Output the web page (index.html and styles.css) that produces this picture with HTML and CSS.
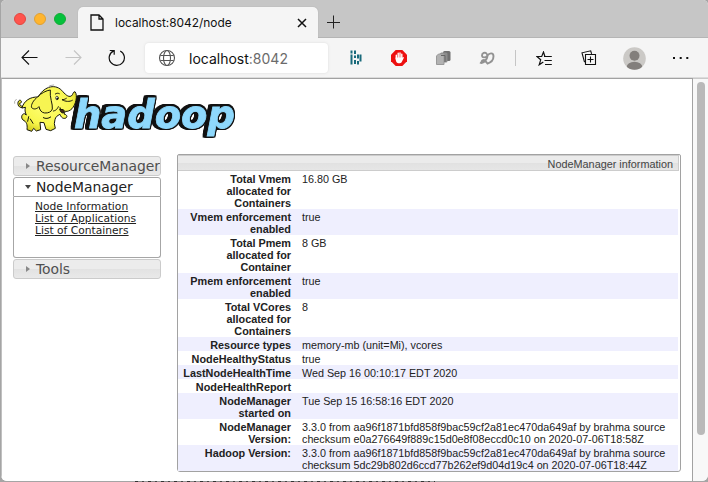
FILE: index.html
```
<!DOCTYPE html>
<html lang="en">
<head>
<meta charset="utf-8">
<title>NodeManager information</title>
<link rel="stylesheet" href="styles.css">
</head>
<body>
<div class="window">
  <header class="tabbar">
    <div class="lights"><i class="red"></i><i class="amber"></i><i class="green"></i></div>
    <div class="tab">
      <svg class="page-icon" width="14" height="17" viewBox="0 0 14 17"><path d="M1 1h8l4 4v11H1zM9 1v4h4" fill="none" stroke="#111" stroke-width="1.3"/></svg>
      <span class="tab-title">localhost:8042/node</span>
      <svg width="10" height="10" viewBox="0 0 10 10"><path d="M1 1l8 8M9 1L1 9" stroke="#111" stroke-width="1.5"/></svg>
    </div>
    <svg class="newtab" width="14" height="14" viewBox="0 0 14 14"><path d="M6.500 .5v13M0 7.500h13" stroke="#222" stroke-width="1"/></svg>
  </header>
  <nav class="toolbar">
    <svg class="back" width="17" height="16" viewBox="0 0 17 16"><path d="M16.500 7.500H1M8 .5L1 7.500l7 7" fill="none" stroke="#111" stroke-width="1.1"/></svg>
    <svg class="forward" width="17" height="16" viewBox="0 0 17 16"><path d="M.5 7.500H16M9 .5l7 7-7 7" fill="none" stroke="#c4c4c4" stroke-width="1.1"/></svg>
    <svg class="reload" width="18" height="18" viewBox="0 0 18 18"><path d="M12.200 2A7.600 7.600 0 1 1 5.600 1.900M1.800 1.500H6.200V5.800" fill="none" stroke="#111" stroke-width="1.200"/></svg>
    <div class="address">
      <svg width="18" height="18" viewBox="0 0 18 18"><g fill="none" stroke="#555" stroke-width="1.100"><circle cx="9" cy="9" r="7.500"/><ellipse cx="9" cy="9" rx="3.500" ry="7.500"/><path d="M2.300 6.500h13.400M2.300 11.500h13.400"/></g></svg>
      <span>localhost<em>:8042</em></span>
    </div>
    <svg class="ext1" width="12" height="16" viewBox="0 0 12 16"><path d="M1.500.5v3M1.500 4.500v10M5 .5v3.500M5 5.500v2.500M5 10v4M8 4.500v4M8 11v3.500M10.500 4.500v7" stroke="#196a7b" stroke-width="2"/></svg>
    <svg class="ext2" width="16" height="16" viewBox="0 0 16 16"><path d="M4.700 0h6.600L16 4.700v6.600L11.300 16H4.700L0 11.300V4.700z" fill="#ed1010"/><path d="M5.300 9V5.200M7.200 8V3.200M9 8V2.900M10.800 9V4.200" stroke="#fff" stroke-width="1.400" stroke-linecap="round"/><path d="M4.600 7.500h6.900l1.100-.5.300.8-2.300 4.400c-1 1.400-4 1.400-5 0-.6-.9-1-2.300-1-4.700z" fill="#fff"/></svg>
    <svg class="ext3" width="15" height="16" viewBox="0 0 15 16"><rect x="7" y="1" width="7.500" height="10" rx="1.500" fill="#707070"/><rect x="4" y="2.500" width="7.500" height="10" rx="1.500" fill="#8c8c8c"/><path d="M.5 6l2-2H8v10.500H.5z" fill="#b2b2b2" stroke="#999"/><path d="M5 5.500h4V12" fill="none" stroke="#666"/></svg>
    <svg class="ext4" width="16" height="15" viewBox="0 0 16 15"><path d="M1 11.500c3.500 2 9.500-5.500 6.500-9C6 .8 2.800 2 3 4.800c.3 2.200 3.500 2.200 5.500-.3 2-3 6-3 6 .8 0 4-3 6.500-6.500 7.500M3 12.500c-1.200-3 1.800-4.500 3.300-2.700l2.500 3" fill="none" stroke="#929292" stroke-width="1.900"/></svg>
    <i class="divider"></i>
    <svg class="fav" width="17" height="15" viewBox="0 0 17 15"><path d="M8.800 5.200L7.500 1 5.700 5.500H1l3.700 3.300-1.500 5L7.300 11M8 5.500h7.800M8.500 9.500h7.300M9 13.500h6.800" fill="none" stroke="#111" stroke-width="1.200"/></svg>
    <svg class="coll" width="16" height="16" viewBox="0 0 16 16"><path d="M3.500 12.200L1 2.800 9.700.8l.9 3M4.500 4.500h10v10h-10zM9.500 6.500v6M6.500 9.500h6" fill="none" stroke="#111" stroke-width="1.100"/></svg>
    <svg class="avatar" width="23" height="23" viewBox="0 0 23 23"><clipPath id="disc"><circle cx="11.500" cy="11.500" r="11.300"/></clipPath><g clip-path="url(#disc)"><path d="M0 0h23v23H0z" fill="#cbc9c6"/><circle cx="11.500" cy="8.800" r="5" fill="#837f7c"/><ellipse cx="11.500" cy="20" rx="7.800" ry="5.300" fill="#837f7c"/></g></svg>
    <svg class="dots" width="16" height="4" viewBox="0 0 16 4"><path d="M0 1h2v2H0zM6.700 1h2v2h-2zM13.300 1h2v2h-2z" fill="#111"/></svg>
  </nav>
  <div class="viewport">
    <main class="page">
      <svg class="logo" width="230" height="62" viewBox="0 0 230 62">
        <text class="wordmark" x="64" y="48" textLength="161" lengthAdjust="spacingAndGlyphs">hadoop</text>
        <defs><radialGradient id="hide" cx=".45" cy=".4" r=".65"><stop offset="0" stop-color="#ffff78"/><stop offset=".7" stop-color="#f8f64c"/><stop offset="1" stop-color="#d3cc20"/></radialGradient></defs>
        <g transform="scale(.33333)" stroke="#15150a" stroke-width="3" stroke-linejoin="round" stroke-linecap="round">
          <path d="M36 83C23 84 20 66 28 61c8-2 8 9 1 9 1 9 6 9 10 8" fill="#e6e030"/>
          <path d="M36 83c6-21 25-33 49-32 13-27 47-43 70-20 10 11 19 22 29 17 6-5 4-12 11-13 9 11 2 40-9 51-6 6-13 9-20 8l-4 8c9 2 11 8 6 12-10 4-15-3-18-11-9 5-13 7-15 16l-2 12 3 14-14 7-14-4-6-20-12-1 2 22-13 4-8-8-6 9-14-5c2-17-2-24-12-29-7-7-4-18 4-19l6 4c-4-8-5-16-3-22z" fill="url(#hide)"/>
          <path d="M85 49C68 61 62 77 65 83c8 8 18 2 22-3 2 10 7 18 17 19 11 1 21-4 23-12 2-14-9-36-6-57-11 1-29 10-36 19z" fill="#f7f452"/>
          <path d="M136 42c4-3 8-3 12-1M169 55c-5 3-8 4-13 4 10 6 23 7 31 2M145 80c-4 10-10 12-15 13M56 110l-3 14M100 113c7 4 15 3 22-2M61 117l8 13M150 83c2 7 4 11 10 11" fill="none"/>
          <path d="M150 88l10 1c4 2 4 9-1 10-5 0-9-5-9-11z" fill="#432719"/>
          <ellipse cx="141" cy="54" rx="4" ry="5.500" fill="#fff" stroke-width="2"/><circle cx="142" cy="56" r="3" fill="#111" stroke="none"/>
          <path d="M115 24l4-7 12-2M14 70v-6l5-6" fill="none" stroke="#888" stroke-width="2"/>
        </g>
      </svg>
      <div class="columns">
        <aside class="menu">
          <h3><i class="closed"></i>ResourceManager</h3>
          <h3 class="active"><i class="open"></i>NodeManager</h3>
          <ul><li><a>Node Information</a></li><li><a>List of Applications</a></li><li><a>List of Containers</a></li></ul>
          <h3 class="last"><i class="closed"></i>Tools</h3>
        </aside>
        <section class="info">
          <div class="caption">NodeManager information</div>
          <table>
            <tr><th>Total Vmem<br>allocated for<br>Containers</th><td>16.80 GB</td></tr>
            <tr><th>Vmem enforcement<br>enabled</th><td>true</td></tr>
            <tr><th>Total Pmem<br>allocated for<br>Container</th><td>8 GB</td></tr>
            <tr><th>Pmem enforcement<br>enabled</th><td>true</td></tr>
            <tr><th>Total VCores<br>allocated for<br>Containers</th><td>8</td></tr>
            <tr><th>Resource types</th><td>memory-mb (unit=Mi), vcores</td></tr>
            <tr><th>NodeHealthyStatus</th><td>true</td></tr>
            <tr><th>LastNodeHealthTime</th><td>Wed Sep 16 00:10:17 EDT 2020</td></tr>
            <tr><th>NodeHealthReport</th><td></td></tr>
            <tr><th>NodeManager<br>started on</th><td>Tue Sep 15 16:58:16 EDT 2020</td></tr>
            <tr><th>NodeManager<br>Version:</th><td>3.3.0 from aa96f1871bfd858f9bac59cf2a81ec470da649af by brahma source<br>checksum e0a276649f889c15d0e8f08eccd0c10 on 2020-07-06T18:58Z</td></tr>
            <tr><th>Hadoop Version:</th><td>3.3.0 from aa96f1871bfd858f9bac59cf2a81ec470da649af by brahma source<br>checksum 5dc29b802d6ccd77b262ef9d04d19c4 on 2020-07-06T18:44Z</td></tr>
          </table>
        </section>
      </div>
    </main>
    <div class="scrollbar"><i></i></div>
  </div>
</div>
<div class="backdrop-edge"></div>
</body>
</html>
```
FILE: styles.css
```
* { box-sizing: border-box; }
body { margin: 0; width: 708px; height: 482px; overflow: hidden; background: #a5a5a5; font-family: "Liberation Sans", Arial, sans-serif; }
svg { flex: none; display: block; }
.window { width: 707px; height: 481px; margin-left: 1px; display: flex; flex-direction: column; background: #f5f5f5; border-radius: 5px 5px 6px 6px; overflow: hidden; }
.backdrop-edge { height: 1px; width: 300px; margin-left: 135px; background: repeating-linear-gradient(90deg, #333 0 3px, #8a8a8a 3px 7px, #444 7px 9px, #999 9px 13px); }

.tabbar { height: 38px; flex: none; display: flex; background: #c6c6c6; box-shadow: inset 0 -1px #b5b5b5; }
.lights { display: flex; gap: 8px; padding: 13px 0 0 13px; width: 77px; flex: none; }
.lights i { width: 12px; height: 12px; border-radius: 50%; border: 1px solid; }
.lights .red { background: #ff544d; border-color: #e2463f; }
.lights .amber { background: #ffb52e; border-color: #dfa033; }
.lights .green { background: #05c13c; border-color: #13ab36; }
.tab { width: 240px; height: 31px; margin-top: 7px; border-radius: 5px 5px 0 0; background: #f5f5f5; box-shadow: 0 0 1px #999; display: flex; align-items: center; padding: 0 12px; clip-path: inset(-2px -2px 0 -2px); }
.tab-title { font: 11.900px Inter, sans-serif; color: #111; margin-left: 11px; width: 182px; flex: none; white-space: nowrap; }
.newtab { margin: 15px 0 0 9px; }

.toolbar { height: 40px; flex: none; display: flex; align-items: center; padding-left: 20px; box-shadow: inset 0 -1px #dcdcdc; }
.forward { margin-left: 27px; }
.reload { margin-left: 26px; }
.address { width: 183px; height: 30px; margin-left: 19px; border-radius: 4px; background: #fff; box-shadow: 0 0 3px #ddd; display: flex; align-items: center; padding-left: 13px; flex: none; }
.address span { font: 14px Inter, sans-serif; color: #111; margin-left: 13px; }
.address em { font-style: normal; color: #6b6b6b; }
.ext1 { margin-left: 22px; }
.ext2 { margin-left: 29px; }
.ext3 { margin-left: 29px; }
.ext4 { margin-left: 28px; }
.divider { width: 1px; height: 16px; background: #c5c5c5; margin-left: 20px; }
.fav { margin-left: 20px; }
.coll { margin-left: 28px; }
.avatar { margin-left: 26px; }
.dots { margin-left: 27px; }

.viewport { flex: 1; min-height: 0; display: flex; }
.page { width: 692px; background: #fff; border: solid #a2a2a2; border-width: 1px 1px 0 0; border-left: 1px solid #c0c0c0; padding-left: 8px; }
.scrollbar { width: 15px; padding: 3px 3px 0 4px; background: #f8f8f8; border-top: 1px solid #c8c8c8; }
.scrollbar i { display: block; width: 8px; height: 353px; border-radius: 4px; background: #b9b9b9; }
.logo { margin-top: 1px; }
.wordmark { font: bold italic 39px "DejaVu Sans", sans-serif; fill: #8ed8fc; stroke: #8ed8fc; stroke-width: .8px; filter: drop-shadow(1.500px 0 #111) drop-shadow(-1.500px 0 #111) drop-shadow(0 1.200px #111) drop-shadow(0 -1.200px #111) drop-shadow(-2px .5px #111); }
.columns { display: flex; align-items: flex-start; padding: 12px 0 0 3px; gap: 16px; }

.menu { width: 148px; padding-top: 2px; font-family: "DejaVu Sans", Verdana, sans-serif; flex: none; }
.menu h3 { margin: 0 0 1px; height: 20px; display: flex; align-items: center; border: 1px solid #cbcbcb; border-radius: 3px; background: linear-gradient(#ececec 0 50%, #e2e2e2 50%, #e9e9e9); color: #505050; font-size: 13.900px; letter-spacing: -.05px; font-weight: normal; white-space: nowrap; overflow: hidden; }
.menu h3 i { margin-left: 12px; width: 10px; flex: none; }
.menu h3 i::before { content: ""; display: block; width: 0; border: solid transparent; }
.menu i.closed::before { border-width: 3px 0 3px 4px; border-left-color: #888; }
.menu i.open::before { border-width: 4px 3px 0; border-top-color: #444; margin-left: -1px; }
.menu h3.active { margin: 0; background: #fff; color: #222; border-color: #a6a6a6; border-radius: 3px 3px 0 0; }
.menu h3.last { margin-top: 1px; }
.menu ul { margin: 0; padding: 4px 0 0 21px; height: 61px; list-style: none; border: 1px solid #a6a6a6; border-top: 0; border-radius: 0 0 3px 3px; font-size: 10.700px; line-height: 12px; color: #222; }
.menu a { text-decoration: underline; }

.info { width: 504px; height: 318px; border: 1px solid #a2a2a2; border-radius: 2px 2px 3px 3px; font-size: 10.850px; line-height: 12px; color: #222; }
.caption { height: 16px; width: 501px; text-align: right; padding: 2px 5px 0 0; line-height: 12px; background: linear-gradient(#ebebeb 0 50%, #e1e1e1 50%, #e6e6e6); border: 1px solid #ccc; border-left: 0; color: #444; }
table { border-collapse: collapse; width: 500px; table-layout: fixed; }
th { width: 118px; padding: 2px 5px 0 0; text-align: right; vertical-align: top; white-space: nowrap; }
td { padding: 2px 0 0 6px; vertical-align: top; white-space: nowrap; font-size: 10.780px; }
tr:nth-child(even) { background: #efeffe; }
```
